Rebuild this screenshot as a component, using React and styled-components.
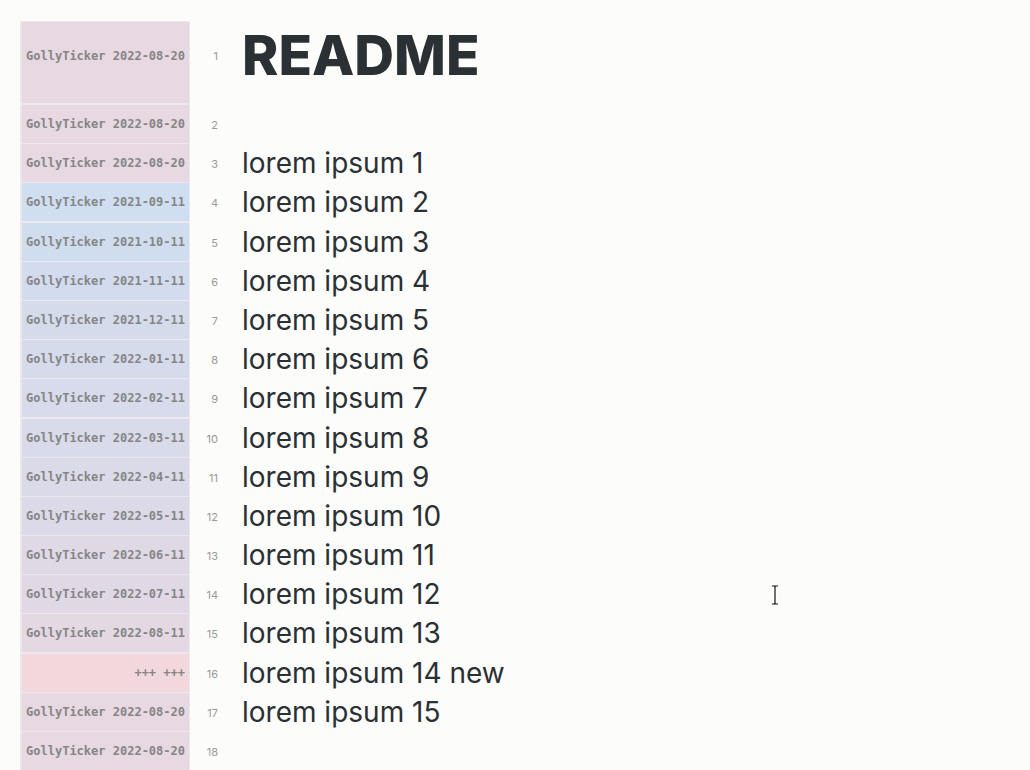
import React from "react";
import styled, { createGlobalStyle } from "styled-components";

const GlobalStyle = createGlobalStyle`
  html, body {
    margin: 0;
    padding: 0;
    background: #fcfcfa;
  }
  body {
    font-family: Inter, "Noto Sans", sans-serif;
  }
`;

const lines = [
  { label: "GollyTicker 2022-08-20", color: "#e7d8e1", text: "README", heading: true },
  { label: "GollyTicker 2022-08-20", color: "#e7d8e1", text: "" },
  { label: "GollyTicker 2022-08-20", color: "#e7d8e1", text: "lorem ipsum 1" },
  { label: "GollyTicker 2021-09-11", color: "#cfdef0", text: "lorem ipsum 2" },
  { label: "GollyTicker 2021-10-11", color: "#d0ddef", text: "lorem ipsum 3" },
  { label: "GollyTicker 2021-11-11", color: "#d2dcee", text: "lorem ipsum 4" },
  { label: "GollyTicker 2021-12-11", color: "#d4dcec", text: "lorem ipsum 5" },
  { label: "GollyTicker 2022-01-11", color: "#d6dbec", text: "lorem ipsum 6" },
  { label: "GollyTicker 2022-02-11", color: "#d8dbeb", text: "lorem ipsum 7" },
  { label: "GollyTicker 2022-03-11", color: "#d9daea", text: "lorem ipsum 8" },
  { label: "GollyTicker 2022-04-11", color: "#dbdae9", text: "lorem ipsum 9" },
  { label: "GollyTicker 2022-05-11", color: "#dcd9e8", text: "lorem ipsum 10" },
  { label: "GollyTicker 2022-06-11", color: "#dfd9e6", text: "lorem ipsum 11" },
  { label: "GollyTicker 2022-07-11", color: "#e1d8e5", text: "lorem ipsum 12" },
  { label: "GollyTicker 2022-08-11", color: "#e4d8e2", text: "lorem ipsum 13" },
  { label: "+++ +++", color: "#f2d7dc", text: "lorem ipsum 14 new" },
  { label: "GollyTicker 2022-08-20", color: "#e7d8e1", text: "lorem ipsum 15" },
  { label: "GollyTicker 2022-08-20", color: "#e7d8e1", text: "" },
];

const Page = styled.div`
  position: relative;
  width: 1030px;
  height: 770px;
  overflow: hidden;
  padding: 21px 0 0 20px;
  box-sizing: border-box;
`;

const Editor = styled.div`
  display: flex;
  flex-direction: column;
`;

const Row = styled.div`
  display: grid;
  grid-template-columns: 170px 30px 1fr;
  align-items: start;
  height: ${(p) => (p.$heading ? "84px" : "39.2px")};
`;

const Gutter = styled.div`
  box-sizing: border-box;
  height: 100%;
  background: ${(p) => p.$color};
  border-left: 2px solid #ece7eb;
  border-right: 1px solid #ece7eb;
  border-top: ${(p) => (p.$first ? "1px solid #ece7eb" : "none")};
  border-bottom: 2px solid #ece8ee;
  padding-right: 4px;
  text-align: right;
  font-family: "DejaVu Sans Mono", "Liberation Mono", monospace;
  font-weight: bold;
  font-size: 12px;
  color: #858585;
  line-height: ${(p) => (p.$heading ? "68px" : "38px")};
  white-space: nowrap;
`;

const LineNo = styled.div`
  text-align: right;
  padding-right: 2px;
  font-size: 11px;
  color: #9a9a9a;
  line-height: ${(p) => (p.$heading ? "70px" : "40px")};
`;

const Content = styled.div`
  padding-left: 22px;
  color: #2b3035;
  white-space: nowrap;
  font-size: ${(p) => (p.$heading ? "55px" : "28px")};
  font-weight: ${(p) => (p.$heading ? 800 : 400)};
  line-height: ${(p) => (p.$heading ? "68px" : "39.2px")};
`;

const Cursor = styled.svg`
  position: absolute;
  left: 770px;
  top: 584px;
`;

export default function App() {
  return (
    <>
      <GlobalStyle />
      <Page>
        <Editor>
          {lines.map((line, i) => (
            <Row key={i} $heading={line.heading}>
              <Gutter $color={line.color} $heading={line.heading} $first={i === 0}>
                {line.label}
              </Gutter>
              <LineNo $heading={line.heading}>{i + 1}</LineNo>
              <Content $heading={line.heading}>{line.text}</Content>
            </Row>
          ))}
        </Editor>
        <Cursor width="10" height="22" viewBox="0 0 10 22">
          <path
            d="M2 2h2.5l0.5 0.6 0.5-0.6H8M5 2.6v16.8M2 20h2.5l0.5-0.6 0.5 0.6H8"
            fill="none"
            stroke="#fff"
            strokeWidth="3"
          />
          <path
            d="M2 2h2.5l0.5 0.6 0.5-0.6H8M5 2.6v16.8M2 20h2.5l0.5-0.6 0.5 0.6H8"
            fill="none"
            stroke="#111"
            strokeWidth="1.2"
          />
        </Cursor>
      </Page>
    </>
  );
}
